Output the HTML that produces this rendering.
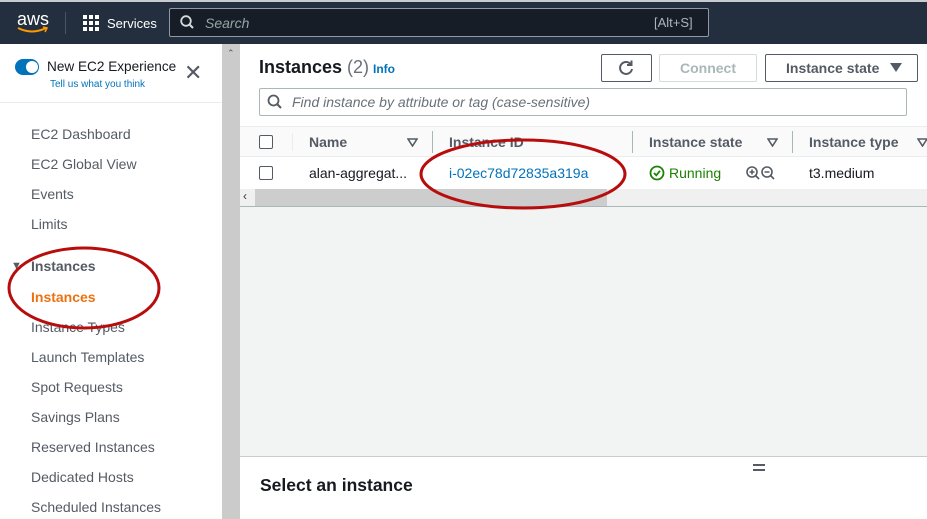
<!DOCTYPE html>
<html><head><style>
*{box-sizing:border-box;margin:0;padding:0}
body{width:927px;height:519px;overflow:hidden;font-family:"Liberation Sans",sans-serif;background:#fff;position:relative;color:#16191f}
.a{position:absolute}
.nav{font-size:14px;color:#545b64}
.tri{font-size:12px;color:#545b64;transform:scaleX(1.2)}
</style></head><body>
<div class="a" style="left:0;top:0;width:927px;height:44px;background:#232f3e;border-top:2px solid #c8ccd0"></div>
<div class="a" style="left:17px;top:9px;color:#fff;font-size:18px">aws</div>
<svg class="a" style="left:16px;top:26px" width="34" height="8"><path d="M2 2 Q16 9 30 2" stroke="#ff9900" stroke-width="2" fill="none"/><path d="M27 1 L31 2 L29 6" stroke="#ff9900" stroke-width="1.5" fill="none"/></svg>
<div class="a" style="left:65px;top:12px;width:1px;height:22px;background:#4a5563"></div>
<svg class="a" style="left:83px;top:15px" width="17" height="17" fill="#fff"><rect x="0" y="0" width="4" height="4"/><rect x="6" y="0" width="4" height="4"/><rect x="12" y="0" width="4" height="4"/><rect x="0" y="6" width="4" height="4"/><rect x="6" y="6" width="4" height="4"/><rect x="12" y="6" width="4" height="4"/><rect x="0" y="12" width="4" height="4"/><rect x="6" y="12" width="4" height="4"/><rect x="12" y="12" width="4" height="4"/></svg>
<div class="a" style="left:107px;top:16px;color:#fff;font-size:13px">Services</div>
<div class="a" style="left:169px;top:8px;width:540px;height:29px;background:#161d26;border:1px solid #8d99a8;border-radius:2px"></div>
<svg class="a" style="left:180px;top:15px" width="14" height="15"><circle cx="6" cy="6" r="4.8" stroke="#d5dbdb" stroke-width="1.8" fill="none"/><path d="M9.5 9.5 L13 13" stroke="#d5dbdb" stroke-width="2"/></svg>
<div class="a" style="left:205px;top:15px;color:#95a5a6;font-size:14px;font-style:italic">Search</div>
<div class="a" style="left:654px;top:15px;color:#aab7b8;font-size:13px">[Alt+S]</div>
<div class="a" style="left:222px;top:44px;width:18px;height:475px;background:#cbcbcb"></div>
<div class="a" style="left:227px;top:48px;color:#555;font-size:9px">&#8963;</div>
<div class="a" style="left:15px;top:59px;width:24px;height:16px;border-radius:8px;background:#0073bb"></div>
<div class="a" style="left:26px;top:61px;width:12px;height:12px;border-radius:6px;background:#fff"></div>
<div class="a" style="left:47px;top:59px;font-size:13.6px;color:#16191f">New EC2 Experience</div>
<div class="a" style="left:50px;top:79px;font-size:10px;color:#0073bb">Tell us what you think</div>
<div class="a" style="left:184px;top:62px;font-size:22px;color:#545b64;line-height:1">&#10005;</div>
<div class="a" style="left:0;top:102px;width:222px;height:1px;background:#eaeded"></div>
<div class="a nav" style="left:31px;top:126px">EC2 Dashboard</div>
<div class="a nav" style="left:31px;top:156px">EC2 Global View</div>
<div class="a nav" style="left:31px;top:186px">Events</div>
<div class="a nav" style="left:31px;top:216px">Limits</div>
<div class="a" style="left:11px;top:260px;font-size:11px;color:#545b64">&#9660;</div>
<div class="a" style="left:31px;top:258px;font-size:14px;font-weight:bold;color:#545b64">Instances</div>
<div class="a" style="left:31px;top:289px;font-size:14px;font-weight:bold;color:#ec7211">Instances</div>
<div class="a nav" style="left:31px;top:319px">Instance Types</div>
<div class="a nav" style="left:31px;top:349px">Launch Templates</div>
<div class="a nav" style="left:31px;top:379px">Spot Requests</div>
<div class="a nav" style="left:31px;top:409px">Savings Plans</div>
<div class="a nav" style="left:31px;top:439px">Reserved Instances</div>
<div class="a nav" style="left:31px;top:469px">Dedicated Hosts</div>
<div class="a nav" style="left:31px;top:499px">Scheduled Instances</div>
<div class="a" style="left:240px;top:44px;width:687px;height:475px;background:#fff"></div>
<div class="a" style="left:259px;top:57px;font-size:18px;font-weight:bold;color:#16191f">Instances <span style="font-weight:normal;color:#687078">(2)</span></div>
<div class="a" style="left:373px;top:62px;font-size:12px;font-weight:bold;color:#0073bb">Info</div>
<div class="a" style="left:601px;top:54px;width:51px;height:28px;border:1px solid #545b64;border-radius:2px"></div>
<svg class="a" style="left:617px;top:59px" width="18" height="18"><path d="M14 5.5 A6 6 0 1 0 15 10" stroke="#545b64" stroke-width="2" fill="none"/><path d="M14.5 1.5 L14.5 6 L10 6" stroke="#545b64" stroke-width="2" fill="none"/></svg>
<div class="a" style="left:659px;top:54px;width:98px;height:28px;border:1px solid #d5dbdb;border-radius:2px;color:#aab7b8;font-size:14px;font-weight:bold;text-align:center;line-height:26px">Connect</div>
<div class="a" style="left:765px;top:54px;width:153px;height:28px;border:1px solid #545b64;border-radius:2px;color:#545b64;font-size:14px;font-weight:bold;line-height:26px;padding-left:20px">Instance state</div>
<svg class="a" style="left:890px;top:63px" width="12" height="10"><path d="M0 0 H12 L6 9 Z" fill="#545b64"/></svg>
<div class="a" style="left:259px;top:88px;width:648px;height:28px;border:1px solid #aab7b8;border-radius:2px"></div>
<svg class="a" style="left:267px;top:94px" width="16" height="16"><circle cx="6.5" cy="6.5" r="5" stroke="#545b64" stroke-width="1.8" fill="none"/><path d="M10 10 L14 14" stroke="#545b64" stroke-width="2"/></svg>
<div class="a" style="left:292px;top:94px;font-size:14px;font-style:italic;color:#687078">Find instance by attribute or tag (case-sensitive)</div>
<div class="a" style="left:240px;top:126px;width:687px;height:31px;background:#fafafa;border-top:1px solid #eaeded;border-bottom:1px solid #eaeded"></div>
<div class="a" style="left:259px;top:135px;width:14px;height:14px;border:1px solid #545b64;border-radius:2px;background:#fff"></div>
<div class="a" style="left:292px;top:133px;width:1px;height:18px;background:#eaeded"></div>
<div class="a" style="left:309px;top:134px;font-size:14px;font-weight:bold;color:#545b64">Name</div>
<svg class="a" style="left:407px;top:138px" width="11" height="9"><path d="M1 1 H10 L5.5 8 Z" fill="none" stroke="#545b64" stroke-width="1.6"/></svg>
<div class="a" style="left:432px;top:131px;width:1px;height:22px;background:#aab7b8"></div>
<div class="a" style="left:449px;top:134px;font-size:14px;font-weight:bold;color:#545b64">Instance ID</div>
<div class="a" style="left:632px;top:131px;width:1px;height:22px;background:#aab7b8"></div>
<div class="a" style="left:649px;top:134px;font-size:14px;font-weight:bold;color:#545b64">Instance state</div>
<svg class="a" style="left:767px;top:138px" width="11" height="9"><path d="M1 1 H10 L5.5 8 Z" fill="none" stroke="#545b64" stroke-width="1.6"/></svg>
<div class="a" style="left:792px;top:131px;width:1px;height:22px;background:#aab7b8"></div>
<div class="a" style="left:809px;top:134px;font-size:14px;font-weight:bold;color:#545b64">Instance type</div>
<svg class="a" style="left:917px;top:138px" width="11" height="9"><path d="M1 1 H10 L5.5 8 Z" fill="none" stroke="#545b64" stroke-width="1.6"/></svg>
<div class="a" style="left:259px;top:166px;width:14px;height:14px;border:1px solid #545b64;border-radius:2px"></div>
<div class="a" style="left:309px;top:165px;font-size:14px;color:#16191f">alan-aggregat...</div>
<div class="a" style="left:449px;top:165px;font-size:14px;color:#0073bb">i-02ec78d72835a319a</div>
<svg class="a" style="left:649px;top:165px" width="16" height="16"><circle cx="8" cy="8" r="6.5" stroke="#1d8102" stroke-width="1.8" fill="none"/><path d="M5 8 L7.3 10.3 L11 5.8" stroke="#1d8102" stroke-width="1.8" fill="none"/></svg>
<div class="a" style="left:669px;top:165px;font-size:14px;color:#1d8102">Running</div>
<svg class="a" style="left:745px;top:165px" width="32" height="16"><circle cx="7" cy="7" r="5" stroke="#545b64" stroke-width="1.6" fill="none"/><path d="M10.5 10.5 L14 14 M4.5 7 H9.5 M7 4.5 V9.5" stroke="#545b64" stroke-width="1.6"/><circle cx="22" cy="7" r="5" stroke="#545b64" stroke-width="1.6" fill="none"/><path d="M25.5 10.5 L29 14 M19.5 7 H24.5" stroke="#545b64" stroke-width="1.6"/></svg>
<div class="a" style="left:809px;top:165px;font-size:14px;color:#16191f">t3.medium</div>
<div class="a" style="left:240px;top:189px;width:687px;height:17px;background:#f0f0f0"></div>
<div class="a" style="left:255px;top:189px;width:352px;height:17px;background:#cdcdcd"></div>
<div class="a" style="left:243px;top:189px;font-size:12px;color:#333">&#8249;</div>
<div class="a" style="left:240px;top:206px;width:687px;height:251px;background:#f2f3f3;border-top:1px solid #aab7b8"></div>
<div class="a" style="left:240px;top:456px;width:687px;height:63px;background:#fff;border-top:1px solid #c9cccc"></div>
<div class="a" style="left:753px;top:464px;width:12px;height:2px;background:#545b64"></div>
<div class="a" style="left:753px;top:469px;width:12px;height:2px;background:#545b64"></div>
<div class="a" style="left:260px;top:475px;font-size:17.5px;font-weight:bold;color:#16191f">Select an instance</div>
<svg class="a" style="left:0;top:0" width="927" height="519"><ellipse cx="523" cy="174" rx="102" ry="34" stroke="#b80d0d" stroke-width="3" fill="none"/><ellipse cx="84" cy="288" rx="75" ry="40" stroke="#b80d0d" stroke-width="3" fill="none"/></svg>
</body></html>
